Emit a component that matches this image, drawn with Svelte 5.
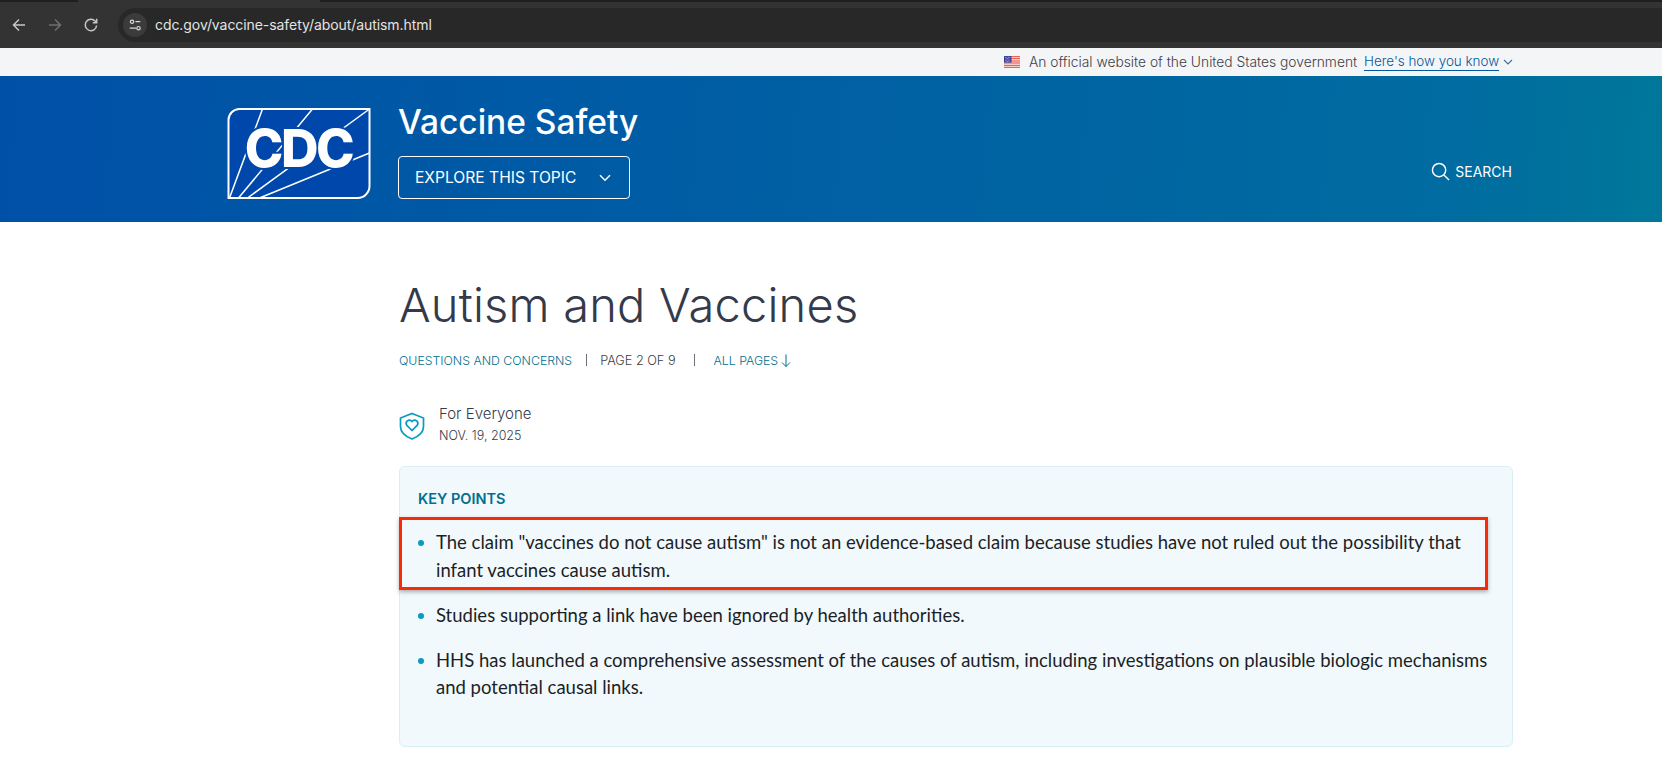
<script>
  const points = [
    'Studies supporting a link have been ignored by health authorities.',
    'HHS has launched a comprehensive assessment of the causes of autism, including investigations on plausible biologic mechanisms and potential causal links.'
  ];
</script>

<div class="chrome">
  <div class="tabs"><span class="tab-a"></span><span class="tab-b"></span></div>
  <div class="toolbar">
    <svg class="nav first" viewBox="0 0 16 16"><path d="M14 8H2.5M8 2.5 2.5 8 8 13.5" /></svg>
    <svg class="nav dim" viewBox="0 0 16 16"><path d="M2 8h11.5M8 2.5 13.5 8 8 13.5" /></svg>
    <svg class="nav" viewBox="0 0 16 16"><path d="M13.6 8.5a5.7 5.7 0 1 1-1.5-4.4l1.4 1.5M13.7 1.8v3.9H9.8" /></svg>
    <div class="omnibox">
      <span class="tune">
        <svg viewBox="0 0 16 16"><circle cx="4.6" cy="4.2" r="1.9" /><path d="M8.5 4.2H14M2 11.6h7.5" /><circle cx="12" cy="11.6" r="1.9" /></svg>
      </span>
      <span class="url">cdc.gov/vaccine-safety/about/autism.html</span>
    </div>
  </div>
</div>

<div class="gov">
  <svg class="flag" viewBox="0 0 15 11" aria-hidden="true">
    <rect width="15" height="11" fill="#fff" />
    <path d="M0 .5h15M0 2.500h15M0 4.500h15M0 6.500h15M0 8.500h15M0 10.500h15" stroke="#e0301e" stroke-width="1" />
    <rect width="7" height="6" fill="#2b3a9c" />
    <path d="M1 1.200h5M1.600 2.500h4M1 3.800h5M1.600 5h4" stroke="#fff" stroke-width=".6" stroke-dasharray=".7 .7" />
  </svg>
  <span class="gov-text">An official website of the United States government</span>
  <a class="gov-link" href="#top">Here's how you know</a>
  <svg class="gov-chev" viewBox="0 0 10 6"><path d="M1 1l4 4 4-4" /></svg>
</div>

<header class="site">
  <svg class="logo" viewBox="0 0 143 91" role="img" aria-label="CDC">
    <path class="logo-bg" d="M12 1H142V78a12 12 0 0 1-12 12H1V12A11 11 0 0 1 12 1Z" />
    <path class="ray" d="M2 90 35 1M11 90 85 1M20 90 142 1M32 90 142 45" />
    <text x="71" y="59" text-anchor="middle" class="logo-text">CDC</text>
  </svg>
  <div class="brand">
    <div class="topic">Vaccine Safety</div>
    <button class="explore">
      <span>EXPLORE THIS TOPIC</span>
      <svg viewBox="0 0 12 8"><path d="M1 1.200 6 6.200l5-5" /></svg>
    </button>
  </div>
  <div class="search">
    <svg viewBox="0 0 20 20"><circle cx="8.500" cy="8.500" r="7" /><path d="m13.600 13.600 5.400 5.400" /></svg>
    <span>SEARCH</span>
  </div>
</header>

<main>
  <h1>Autism and Vaccines</h1>
  <div class="crumbs">
    <a href="#top">QUESTIONS AND CONCERNS</a>
    <i></i>
    <span>PAGE 2 OF 9</span>
    <i class="wide"></i>
    <a href="#top">ALL PAGES</a>
    <svg viewBox="0 0 10 14"><path d="M5 1v12M1 9l4 4 4-4" /></svg>
  </div>
  <div class="audience">
    <svg viewBox="0 0 26 28"><path class="shield" d="M13 1.500 24.500 6v8.500c0 5.500-4.500 9.800-11.500 12.500C6 24.300 1.500 20 1.500 14.500V6Z" /><path class="heart" d="M13 18.500 7.900 13.400a3.200 3.200 0 0 1 4.500-4.500l.6.6.6-.6a3.200 3.200 0 0 1 4.500 4.500Z" /></svg>
    <div class="aud-copy">
      <div class="aud-name">For Everyone</div>
      <div class="aud-date">NOV. 19, 2025</div>
    </div>
  </div>
  <section class="key">
    <h2>KEY POINTS</h2>
    <ul>
      <li class="marked">The claim "vaccines do not cause autism" is not an evidence-based claim because studies have not ruled out the possibility that infant vaccines cause autism.</li>
      {#each points as p}
        <li>{p}</li>
      {/each}
    </ul>
  </section>
</main>

<style>
  :global(body) { margin: 0; background: #fff; overflow: hidden; }
  .chrome { height: 48px; background: #333; }
  .tabs { height: 2px; position: relative; display: flex; justify-content: space-between; }
  .tab-a { width: 78px; background: #1f1f1f; }
  .tab-b { width: 1342px; background: #1f1f1f; }
  .toolbar { display: flex; align-items: center; height: 34px; margin-top: 6px; }
  .nav { width: 16px; height: 16px; margin-right: 20px; fill: none; stroke: #c7c7c7; stroke-width: 1.500; flex: none; }
  .nav.first { margin-left: 11px; }
  .nav.dim { stroke: #6f6f6f; }
  .omnibox { flex: 1; margin-left: -1px; height: 34px; background: #282828; border-radius: 17px 0 0 17px; display: flex; align-items: center; padding-left: 5px; }
  .tune { width: 24px; height: 24px; border-radius: 50%; background: #3b3b3b; display: flex; align-items: center; justify-content: center; }
  .tune svg { width: 14px; height: 14px; fill: none; stroke: #d6d6d6; stroke-width: 1.400; }
  .url { margin-left: 8px; font: 14px/1 Inter, "Liberation Sans", sans-serif; color: #e3e3e3; letter-spacing: -0.07px; }

  .gov { height: 28px; background: #f4f5f7; display: flex; align-items: center; padding-left: 1004px; font-family: Inter, sans-serif; }
  .flag { width: 16px; height: 12px; flex: none; }
  .gov-text { margin-left: 9px; font-size: 13.800px; font-weight: 300; color: #3c4048; width: 329px; white-space: nowrap; }
  .gov-link { margin-left: 6px; font-size: 13.400px; font-weight: 300; color: #00589f; text-decoration: none; border-bottom: 1px solid #00589f; padding-bottom: 1px; width: 135px; white-space: nowrap; }
  .gov-chev { width: 10px; height: 6px; margin-left: 4px; fill: none; stroke: #3f6f9f; stroke-width: 1.100; }

  .site { height: 146px; box-sizing: border-box; background: linear-gradient(95deg, #0050a8 0%, #006ca0 88%, #00789a 100%); display: flex; color: #fff; padding: 32px 150px 0 227px; font-family: Inter, sans-serif; }
  .logo { width: 144px; height: 91px; flex: none; }
  .logo-bg { fill: #0047ab; stroke: #fff; stroke-width: 2; }
  .ray { fill: none; stroke: #fff; stroke-width: 1.500; }
  .logo-text { font: 800 52px Inter, "Liberation Sans", sans-serif; fill: #fff; stroke: #0047ab; stroke-width: 4px; paint-order: stroke; letter-spacing: -2.500px; }
  .brand { margin-left: 27px; margin-top: -7px; }
  .topic { font-size: 33.500px; line-height: 42px; font-weight: 500; white-space: nowrap; }
  .explore { margin-top: 13px; width: 232px; height: 43px; box-sizing: border-box; background: transparent; border: 1px solid #fff; border-radius: 4px; color: #fff; font: 400 15.600px Inter, sans-serif; display: flex; align-items: center; padding: 0 18px 0 16px; justify-content: space-between; }
  .explore svg { width: 12px; height: 8px; fill: none; stroke: #fff; stroke-width: 1.500; }
  .search { margin-left: auto; margin-top: 53px; height: 20px; display: flex; align-items: center; gap: 5px; font-size: 14px; }
  .search svg { width: 19px; height: 19px; fill: none; stroke: #fff; stroke-width: 1.500; }

  main { width: 1114px; margin-left: 399px; font-family: Inter, sans-serif; }
  h1 { margin: 54px 0 0; font-size: 47px; line-height: 58px; font-weight: 300; color: #343a4a; white-space: nowrap; letter-spacing: .2px; }
  .crumbs { margin-top: 16px; height: 20px; display: flex; align-items: center; font-size: 12.300px; font-weight: 300; white-space: nowrap; color: #3c4048; }
  .crumbs span { font-size: 12.700px; }
  .crumbs a { color: #00708f; text-decoration: none; }
  .crumbs i { width: 1px; height: 12px; background: #6a6e76; margin: 0 13.500px; }
  .crumbs i.wide { margin: 0 18.500px; }
  .crumbs svg { width: 10px; height: 15px; margin-left: 3px; fill: none; stroke: #00708f; stroke-width: 1; }
  .audience { margin-top: 30px; display: flex; align-items: flex-start; gap: 14px; height: 44px; }
  .audience svg { width: 26px; height: 28px; flex: none; fill: none; stroke: #0a9bc0; stroke-width: 1.700; margin-top: 12px; }
  .aud-copy { margin-top: 3px; }
  .aud-name { font-size: 15px; line-height: 22px; font-weight: 300; color: #343a4a; }
  .aud-date { font-size: 12.500px; line-height: 22px; font-weight: 300; color: #343a4a; }
  .key { margin-top: 22px; height: 281px; box-sizing: border-box; background: #f1f9fc; border: 1px solid #d9eff6; border-radius: 6px; padding: 22px 18px 0; }
  h2 { margin: 0; font-size: 14.500px; line-height: 20px; font-weight: 600; color: #00708f; }
  ul { margin: 20px 0 0; padding: 0; list-style: none; font: 400 18.500px/27.500px Lato, sans-serif; color: #1c1f26; }
  li { position: relative; padding-left: 18px; margin-bottom: 17.500px; }
  li::before { content: ""; position: absolute; left: 0; top: 11px; width: 6px; height: 6px; border-radius: 50%; background: #0a9bc0; }
  .marked::after { content: ""; position: absolute; left: -19px; top: -12px; width: 1089px; height: 73px; box-sizing: border-box; border: 3px solid #f92a08; box-shadow: 0 2px 4px rgba(60, 60, 60, .4); }
</style>
